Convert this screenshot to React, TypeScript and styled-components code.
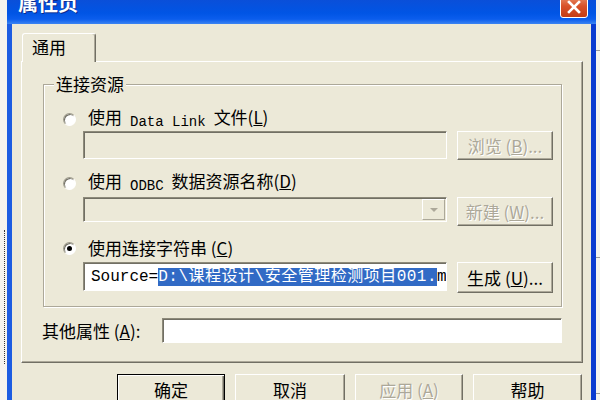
import React from "react";
import styled, { createGlobalStyle } from "styled-components";

const FONT = `"Noto Sans CJK SC", "Noto Sans", sans-serif`;
const MONO = `"Liberation Mono", "Noto Sans CJK SC", monospace`;

const Global = createGlobalStyle`
  html, body { margin: 0; padding: 0; }
  body {
    width: 600px;
    height: 400px;
    overflow: hidden;
    background: #f4f3ee;
    font-family: ${FONT};
  }
`;

const Screen = styled.div`
  display: flex;
  width: 600px;
  height: 400px;
  overflow: hidden;
`;

const LeftStrip = styled.div`
  width: 7px;
  flex: none;
  box-sizing: border-box;
  padding-top: 230px;
  background: #f4f3ee;
`;

const Dots = styled.div`
  margin-left: 4px;
  height: 134px;
  border-left: 1px dotted #333;
`;

const RightStrip = styled.div`
  flex: 1;
  background: #f4f3ee;
  display: flex;
  flex-direction: column;
`;

const StripLine = styled.div<{ $top: number }>`
  margin-top: ${(p) => p.$top}px;
  border-top: 1px solid #9a9a9a;
`;

const Window = styled.div`
  width: 589px;
  flex: none;
  display: flex;
  flex-direction: column;
`;

const TitleBar = styled.div`
  height: 24px;
  flex: none;
  box-sizing: border-box;
  display: flex;
  align-items: flex-start;
  justify-content: space-between;
  padding: 0 8px 0 11px;
  background: linear-gradient(
    to bottom,
    #0a4fd9 0%,
    #0055e5 55%,
    #0b5ded 80%,
    #3b84f2 100%
  );
`;

const TitleText = styled.div`
  margin-top: -7px;
  font-family: ${FONT};
  font-size: 20px;
  line-height: 20px;
  font-weight: 700;
  color: #fff;
  text-shadow: 1px 1px #0a2a8c;
`;

const CloseButton = styled.div`
  margin-top: -4px;
  width: 28px;
  height: 22px;
  box-sizing: border-box;
  border: 1px solid #fff;
  border-radius: 3px;
  background: linear-gradient(to bottom, #e88a64 0%, #d9522a 45%, #c43c15 100%);
  display: flex;
  align-items: center;
  justify-content: center;
`;

const Frame = styled.div`
  flex: 1;
  background: #ece9d8;
  border-left: 5px solid #1c5ce2;
  border-right: 5px solid #0a3bd0;
  padding: 9px 8px 0 9px;
  display: flex;
  flex-direction: column;
`;

const TabRow = styled.div`
  display: flex;
  padding-left: 1px;
  height: 28px;
`;

const Tab = styled.div`
  position: relative;
  z-index: 1;
  width: 74px;
  height: 29px;
  box-sizing: border-box;
  background: #ece9d8;
  border-top: 1px solid #fff;
  border-left: 1px solid #fff;
  border-right: 1px solid #716f64;
  box-shadow: inset -1px 0 #aca899;
  border-radius: 3px 3px 0 0;
  padding: 3px 0 0 9px;
  font-size: 17px;
  line-height: 20px;
  color: #000;
`;

const Panel = styled.div`
  height: 302px;
  box-sizing: border-box;
  border: 1px solid;
  border-color: #fff #716f64 #716f64 #fff;
  box-shadow: inset -1px -1px #aca899;
  padding: 0 20px 0 21px;
  display: flex;
  flex-direction: column;
`;

const GroupBox = styled.div`
  position: relative;
  margin-top: 22px;
  height: 223px;
  box-sizing: border-box;
  border: 1px solid #aca899;
  box-shadow: inset 1px 1px #fff, 1px 1px #fff;
  padding: 0 8px 0 19px;
  display: flex;
  flex-direction: column;
`;

const Legend = styled.div`
  position: absolute;
  left: 10px;
  top: -10px;
  padding: 0 2px;
  background: #ece9d8;
  font-size: 17px;
  line-height: 18px;
  color: #000;
`;

const RadioRow = styled.div<{ $top: number }>`
  margin-top: ${(p) => p.$top}px;
  height: 22px;
  display: flex;
  align-items: center;
  font-size: 17px;
  color: #000;
  white-space: nowrap;
`;

const RadioLabel = styled.span`
  line-height: 22px;
`;

const Radio = styled.span<{ $checked?: boolean }>`
  width: 13px;
  height: 13px;
  flex: none;
  box-sizing: border-box;
  border-radius: 50%;
  border: 1px solid;
  border-color: #9d9a8a #fff #fff #9d9a8a;
  box-shadow: inset 1px 1px #716f64;
  background: #fff;
  margin-right: 12px;
  display: flex;
  align-items: center;
  justify-content: center;
  &::after {
    content: "";
    display: ${(p) => (p.$checked ? "block" : "none")};
    width: 5px;
    height: 5px;
    border-radius: 50%;
    background: #000;
  }
`;

const Mono = styled.span`
  font-family: ${MONO};
  font-size: 14px;
  margin: 0 8px;
  vertical-align: -2px;
`;

const FieldRow = styled.div<{ $top: number }>`
  margin-top: ${(p) => p.$top}px;
  padding-left: 20px;
  display: flex;
  align-items: flex-start;
  gap: 10px;
`;

const TextBox = styled.div<{ $w: number; $h: number; $disabled?: boolean }>`
  width: ${(p) => p.$w}px;
  height: ${(p) => p.$h}px;
  flex: none;
  box-sizing: border-box;
  border: 1px solid;
  border-color: #8d8a7a #fff #fff #8d8a7a;
  box-shadow: inset 1px 1px #716f64;
  background: ${(p) => (p.$disabled ? "#ece9d8" : "#fff")};
  display: flex;
  align-items: center;
  overflow: hidden;
  white-space: nowrap;
  font-family: ${MONO};
  font-size: 16px;
  color: #000;
`;

const BoxText = styled.span`
  padding-left: 7px;
  line-height: 20px;
`;

const Selected = styled.span`
  background: #316ac5;
  color: #fff;
  letter-spacing: 0.5px;
`;

const DropButton = styled.div`
  margin-left: auto;
  margin-right: 1px;
  width: 23px;
  height: 21px;
  box-sizing: border-box;
  border: 1px solid;
  border-color: #fff #aca899 #aca899 #fff;
  background: #ece9d8;
  display: flex;
  align-items: center;
  justify-content: center;
`;

const Arrow = styled.span`
  width: 0;
  height: 0;
  border-left: 4px solid transparent;
  border-right: 4px solid transparent;
  border-top: 4px solid #aca899;
`;

const Button = styled.button<{ $w: number; $h: number; $default?: boolean }>`
  width: ${(p) => p.$w}px;
  height: ${(p) => p.$h}px;
  flex: none;
  box-sizing: border-box;
  padding: 0;
  background: #ece9d8;
  border: 1px solid;
  border-color: ${(p) => (p.$default ? "#000" : "#fff #716f64 #716f64 #fff")};
  box-shadow: ${(p) =>
    p.$default
      ? "inset 1px 1px #fff, inset -1px -1px #716f64, inset -2px -2px #aca899"
      : "inset -1px -1px #aca899"};
  font-family: ${FONT};
  font-size: 17px;
  line-height: 20px;
  color: #000;
  white-space: nowrap;
  &:disabled {
    color: #aca899;
    text-shadow: 1px 1px #fff;
  }
`;

const OtherRow = styled.div`
  margin-top: 11px;
  height: 25px;
  display: flex;
  align-items: center;
  justify-content: space-between;
  margin-left: -1px;
  font-size: 17px;
  color: #000;
`;

const ButtonBar = styled.div`
  margin-top: 11px;
  display: flex;
  justify-content: flex-end;
  gap: 10px;
  padding-right: 1px;
`;

export default function App() {
  return (
    <>
      <Global />
      <Screen>
        <LeftStrip>
          <Dots />
        </LeftStrip>
        <Window>
          <TitleBar>
            <TitleText>属性页</TitleText>
            <CloseButton>
              <svg width="16" height="16" viewBox="0 0 16 16">
                <path
                  d="M3 3 L13 13 M13 3 L3 13"
                  stroke="#fff"
                  strokeWidth="2.6"
                  strokeLinecap="square"
                />
              </svg>
            </CloseButton>
          </TitleBar>
          <Frame>
            <TabRow>
              <Tab>通用</Tab>
            </TabRow>
            <Panel>
              <GroupBox>
                <Legend>连接资源</Legend>
                <RadioRow $top={23}>
                  <Radio />
                  <RadioLabel>
                    使用<Mono>Data Link</Mono>文件(<u>L</u>)
                  </RadioLabel>
                </RadioRow>
                <FieldRow $top={1}>
                  <TextBox $w={364} $h={28} $disabled />
                  <Button $w={96} $h={29} disabled>
                    浏览 (<u>B</u>)...
                  </Button>
                </FieldRow>
                <RadioRow $top={12}>
                  <Radio />
                  <RadioLabel>
                    使用<Mono>ODBC</Mono>数据资源名称(<u>D</u>)
                  </RadioLabel>
                </RadioRow>
                <FieldRow $top={3}>
                  <TextBox $w={364} $h={25} $disabled>
                    <DropButton>
                      <Arrow />
                    </DropButton>
                  </TextBox>
                  <Button $w={96} $h={29} disabled>
                    新建 (<u>W</u>)...
                  </Button>
                </FieldRow>
                <RadioRow $top={11}>
                  <Radio $checked />
                  <RadioLabel>
                    使用连接字符串 (<u>C</u>)
                  </RadioLabel>
                </RadioRow>
                <FieldRow $top={3}>
                  <TextBox $w={364} $h={29}>
                    <BoxText>
                      Source=<Selected>D:\课程设计\安全管理检测项目001.</Selected>mdb
                    </BoxText>
                  </TextBox>
                  <Button $w={96} $h={31}>
                    生成 (<u>U</u>)...
                  </Button>
                </FieldRow>
              </GroupBox>
              <OtherRow>
                <span>
                  其他属性 (<u>A</u>):
                </span>
                <TextBox $w={400} $h={25} />
              </OtherRow>
            </Panel>
            <ButtonBar>
              <Button $w={108} $h={32} $default>
                确定
              </Button>
              <Button $w={110} $h={32}>
                取消
              </Button>
              <Button $w={108} $h={32} disabled>
                应用 (<u>A</u>)
              </Button>
              <Button $w={109} $h={32}>
                帮助
              </Button>
            </ButtonBar>
          </Frame>
        </Window>
        <RightStrip>
          <StripLine $top={50} />
          <StripLine $top={206} />
          <StripLine $top={135} />
        </RightStrip>
      </Screen>
    </>
  );
}
